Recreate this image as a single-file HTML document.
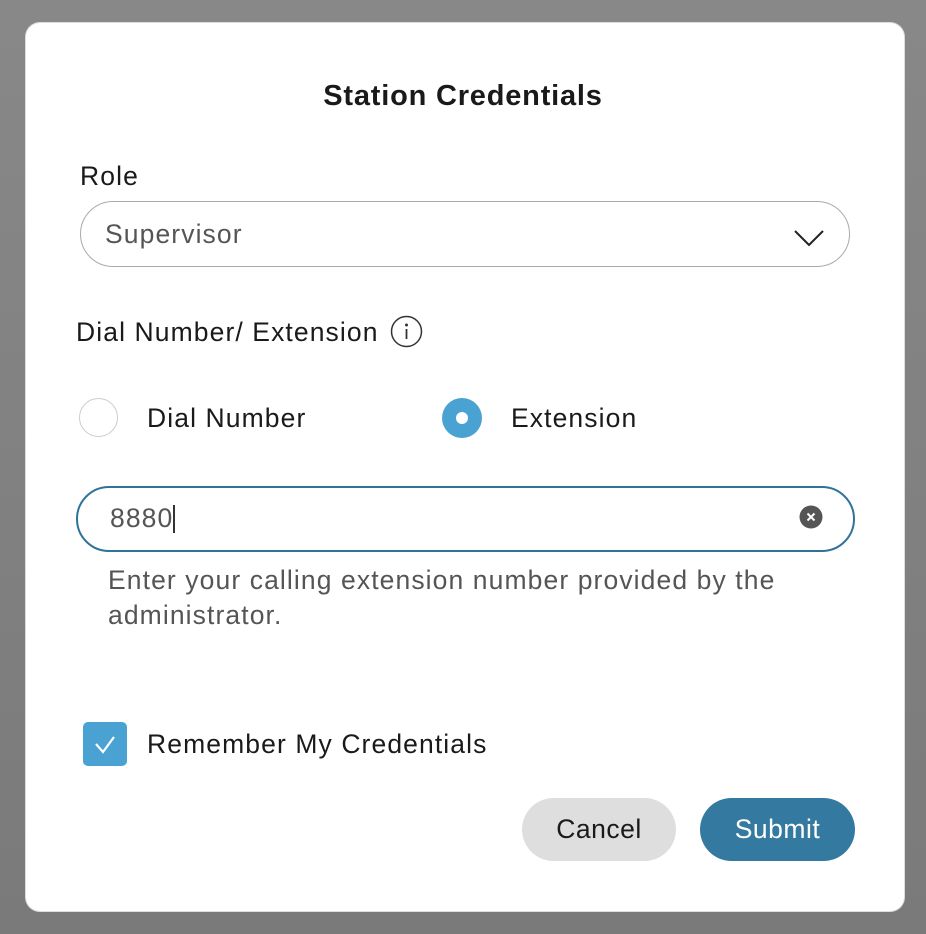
<!DOCTYPE html>
<html><head><style>
body{margin:0;width:926px;height:934px;background:linear-gradient(#888,#7a7a7a);font-family:"Liberation Sans",sans-serif;position:relative;overflow:hidden}
.d{position:absolute;left:26px;top:23px;width:878px;height:888px;background:#fff;border-radius:14px;box-shadow:0 0 0 1px #ddd}
.a{position:absolute;white-space:nowrap;font-size:26.5px;letter-spacing:1.1px;color:#1a1a1a}
</style></head><body>
<div class="d"></div>
<div class="a" style="left:0;width:926px;text-align:center;top:80px;font-weight:bold;font-size:29px;letter-spacing:0.8px">Station Credentials</div>
<div class="a" style="left:80px;top:161px">Role</div>
<div style="position:absolute;left:80px;top:201px;width:768px;height:64px;border:1.5px solid #aaa;border-radius:33px"></div>
<div class="a" style="left:105px;top:219px;color:#555">Supervisor</div>
<svg style="position:absolute;left:793px;top:228px" width="32" height="20"><path d="M2 3 L16 17 L30 3" fill="none" stroke="#222" stroke-width="2"/></svg>
<div class="a" style="left:76px;top:317px">Dial Number/ Extension</div>
<svg style="position:absolute;left:390px;top:315px" width="33" height="33"><circle cx="16.5" cy="16.5" r="15" fill="none" stroke="#333" stroke-width="1.5"/><circle cx="16.5" cy="10" r="1.5" fill="#333"/><path d="M16.5 14v10" stroke="#333" stroke-width="1.8"/></svg>
<div style="position:absolute;left:79px;top:398px;width:37px;height:37px;border:1.5px solid #ccc;border-radius:50%"></div>
<div class="a" style="left:147px;top:403px">Dial Number</div>
<div style="position:absolute;left:442px;top:398px;width:40px;height:40px;background:#4aa2d2;border-radius:50%"></div>
<div style="position:absolute;left:456px;top:412px;width:12px;height:12px;background:#fff;border-radius:50%"></div>
<div class="a" style="left:511px;top:403px">Extension</div>
<div style="position:absolute;left:76px;top:486px;width:775px;height:62px;border:2px solid #2f7399;border-radius:33px"></div>
<div class="a" style="left:110px;top:503px;color:#555">8880<span style="display:inline-block;width:1.5px;height:28px;background:#333;vertical-align:-6px"></span></div>
<svg style="position:absolute;left:799px;top:505px" width="24" height="24"><circle cx="12" cy="12" r="11.5" fill="#555"/><path d="M8.5 8.5l7 7M15.5 8.5l-7 7" stroke="#fff" stroke-width="2"/></svg>
<div class="a" style="left:108px;top:563px;color:#555;line-height:35px">Enter your calling extension number provided by the<br>administrator.</div>
<div style="position:absolute;left:83px;top:722px;width:44px;height:44px;background:#4aa2d2;border-radius:5px"></div>
<svg style="position:absolute;left:83px;top:722px" width="44" height="44"><path d="M13 22 L20 30 L31 15" fill="none" stroke="#fff" stroke-width="2.2"/></svg>
<div class="a" style="left:147px;top:729px">Remember My Credentials</div>
<div style="position:absolute;left:522px;top:798px;width:154px;height:63px;background:#dedede;border-radius:32px;font-size:26.5px;letter-spacing:0.5px;line-height:63px;text-align:center;color:#1a1a1a">Cancel</div>
<div style="position:absolute;left:700px;top:798px;width:155px;height:63px;background:#347aa0;border-radius:32px;font-size:26.5px;letter-spacing:0.5px;line-height:63px;text-align:center;color:#fff">Submit</div>
</body></html>
